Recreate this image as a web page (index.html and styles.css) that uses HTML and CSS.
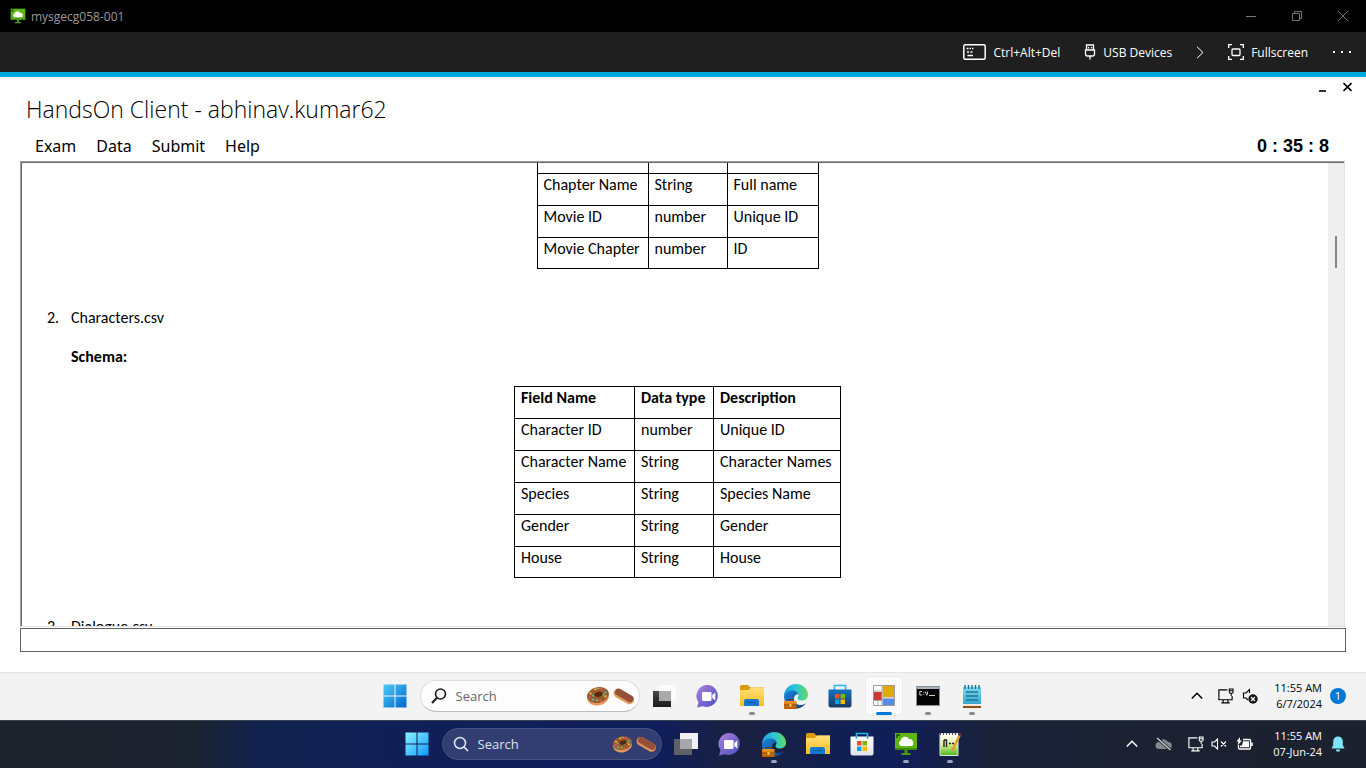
FILE: index.html
```html
<!DOCTYPE html>
<html lang="en">
<head>
<meta charset="utf-8">
<title>mysgecg058-001</title>
<link rel="stylesheet" href="styles.css">
</head>
<body>
<svg class="defs" aria-hidden="true">
  <defs>
    <linearGradient id="winBlue" x1="0" y1="0" x2="1" y2="1"><stop offset="0" stop-color="#4cc9fb"/><stop offset="1" stop-color="#0067c8"/></linearGradient>
    <linearGradient id="winCyan" x1="0" y1="0" x2="1" y2="1"><stop offset="0" stop-color="#8df4ff"/><stop offset="1" stop-color="#0a9bff"/></linearGradient>
    <linearGradient id="chatG" x1="0" y1="0" x2="1" y2="1"><stop offset="0" stop-color="#a982d8"/><stop offset="1" stop-color="#4b4fc4"/></linearGradient>
    <linearGradient id="foldG" x1="0" y1="0" x2="0" y2="1"><stop offset="0" stop-color="#ffe07a"/><stop offset="1" stop-color="#fdbb1f"/></linearGradient>
    <linearGradient id="edgeTop" x1="0" y1="0" x2="1" y2="0"><stop offset="0" stop-color="#1f9fe0"/><stop offset=".5" stop-color="#2cc6d8"/><stop offset="1" stop-color="#5fdc5a"/></linearGradient>
    <linearGradient id="edgeLow" x1="0" y1="0" x2="1" y2="1"><stop offset="0" stop-color="#1b86dc"/><stop offset="1" stop-color="#0b3f86"/></linearGradient>
    <linearGradient id="caseG" x1="0" y1="0" x2="0" y2="1"><stop offset="0" stop-color="#f09a1c"/><stop offset="1" stop-color="#b45a04"/></linearGradient>
    <linearGradient id="bagBlue" x1="0" y1="0" x2="0" y2="1"><stop offset="0" stop-color="#1272c0"/><stop offset="1" stop-color="#1b3a63"/></linearGradient>
    <linearGradient id="bagWhite" x1="0" y1="0" x2="0" y2="1"><stop offset="0" stop-color="#ffffff"/><stop offset="1" stop-color="#dfe3ea"/></linearGradient>
    <linearGradient id="noteG" x1="0" y1="0" x2="0" y2="1"><stop offset="0" stop-color="#7fdcf0"/><stop offset="1" stop-color="#35a6d2"/></linearGradient>
    <linearGradient id="darkG" x1="0" y1="0" x2="0" y2="1"><stop offset="0" stop-color="#454545"/><stop offset="1" stop-color="#1c1c1c"/></linearGradient>
    <linearGradient id="npG" x1="0" y1="0" x2="0" y2="1"><stop offset=".1" stop-color="#fbfff0"/><stop offset=".5" stop-color="#d4f09a"/><stop offset="1" stop-color="#4fb81c"/></linearGradient>
    <symbol id="cloudpc" viewBox="0 0 24 24">
      <path d="M1 1h22v17H1z" fill="#5cb615"/><path d="M1 16h22v2H1z" fill="#3f8a0b"/>
      <path d="M3 6V3h3" fill="none" stroke="#1e4d05" stroke-width="1.4"/>
      <path d="M7 14a3 3 0 0 1-.3-5.600A4.500 4.500 0 0 1 15 7a4 4 0 0 1 3 7z" fill="#fff"/>
      <path d="M10.500 18h3v3h3v2h-9v-2h3z" fill="#4c9c10"/>
    </symbol>
    <symbol id="chat" viewBox="0 0 24 24">
      <path d="M12.500 1A11 11 0 1 1 7 22.200L1 23.500l1.500-5.200A11 11 0 0 1 12.500 1z" fill="url(#chatG)"/>
      <rect x="6" y="8" width="9.500" height="9" rx="1.200" fill="#fff"/><path d="M16.300 11l3-2.500v8l-3-2.500z" fill="#fff"/>
    </symbol>
    <symbol id="folder" viewBox="0 0 26 24">
      <path d="M1 2.500Q1 1 2.500 1H9l2.500 2.500H25V12H1z" fill="#d99a0c"/>
      <path d="M1 6h8.500L12 3.500h13V22H1z" fill="url(#foldG)"/>
      <path d="M5 22v-5q0-2 2-2h11q2 0 2 2v5z" fill="#1479cc"/><path d="M8 18.500h9" stroke="#0b5aa0" stroke-width="1"/>
    </symbol>
    <symbol id="edge" viewBox="0 0 26 26">
      <path d="M1 13C1 6 6.500 1 13 1s12 5 12 10.500c0 4-3 6-6.500 6-3 0-4-1.500-4-2.500s1-1.300 1-3c0-2-2-4-5-4C6 8 2 11 1 13z" fill="url(#edgeTop)"/>
      <path d="M1 13c1-3 4-5.500 8.500-5.500 3.500 0 5.500 2 6 4C13 10.500 11 13 11 16c0 3.500 3 6 6.500 6 2 0 4-.5 5.500-2-2 3.500-6 5.500-10 5.500C6 25.500 1 20 1 13z" fill="url(#edgeLow)"/>
      <path d="M1 18h12.500v8H1z" fill="url(#caseG)"/><path d="M4.500 18v-1.500h5.500V18" fill="none" stroke="#6e3704" stroke-width="1"/>
      <path d="M1 22h12.500" stroke="#8a4604"/><rect x="6.500" y="21" width="2" height="2.500" fill="#ffd257"/>
    </symbol>
    <symbol id="tiles" viewBox="0 0 10 10">
      <path d="M0 0h4.500v4.500H0z" fill="#f25022"/><path d="M5.500 0H10v4.500H5.500z" fill="#7fba00"/><path d="M0 5.500h4.500V10H0z" fill="#00a4ef"/><path d="M5.500 5.500H10V10H5.500z" fill="#ffb900"/>
    </symbol>
    <symbol id="donut" viewBox="0 0 24 20">
      <ellipse cx="12" cy="11" rx="11" ry="8.500" fill="#e39a5a" transform="rotate(-12 12 11)"/>
      <ellipse cx="12" cy="9" rx="11" ry="7.800" fill="#9a5a30" transform="rotate(-12 12 9)"/>
      <ellipse cx="12.500" cy="8.500" rx="4" ry="2.400" fill="#54280f" transform="rotate(-12 12 8)"/>
      <g stroke-width="1.500" stroke-linecap="round"><path d="M4 7l1 .8M9 3.500l1.200-.3M19 11l1-1" stroke="#ffc531"/><path d="M3.500 11l1 .8M15 3l1 .6M14 14.500l1 .4" stroke="#ea4e8c"/><path d="M6.500 14l1-.6M19 6l.8.700M6.500 9.500l.6.400" stroke="#47c7c9"/><path d="M10.500 14l1 .5M12 2.500h.8M17.500 8.500l.6.500" stroke="#82cc4a"/></g>
    </symbol>
    <symbol id="eclair" viewBox="0 0 24 20">
      <rect x="0" y="5.500" width="24" height="10" rx="5" fill="#e2965c" transform="rotate(30 12 10)"/>
      <rect x="1" y="5.500" width="22" height="7.500" rx="3.700" fill="#95503a" transform="rotate(30 12 10)"/>
    </symbol>
    <symbol id="monitor" viewBox="0 0 18 18">
      <path d="M11 2.500H2v10.500h14V9M6.500 13v3M11.500 13v3M4.500 16.300h9" fill="none" stroke="currentColor" stroke-width="1.200"/>
      <path d="M13 1.500h4V5q0 1-1 1h-2q-1 0-1-1zM15 6v3M13.500 3.500h3" fill="none" stroke="currentColor" stroke-width="1.100"/>
    </symbol>
    <symbol id="up" viewBox="0 0 12 12"><path d="M.8 8.500L6 3.300l5.200 5.200" fill="none" stroke="currentColor" stroke-width="1.500"/></symbol>
  </defs>
</svg>

<header class="titlebar">
  <svg class="titlebar-logo"><use href="#cloudpc"/></svg>
  <span class="titlebar-name">mysgecg058-001</span>
  <button class="win-btn" aria-label="Minimize"><svg width="10" height="10" viewBox="0 0 10 10"><path d="M0 5.500h10"/></svg></button>
  <button class="win-btn" aria-label="Restore"><svg width="10" height="10" viewBox="0 0 10 10"><path d="M.5 2.500h7v7h-7zM2.500 2.500v-2h7v7h-2"/></svg></button>
  <button class="win-btn" aria-label="Close"><svg width="10" height="10" viewBox="0 0 10 10"><path d="M0 0l10 10M10 0L0 10"/></svg></button>
</header>

<nav class="toolbar">
  <button class="tool"><svg width="23" height="16" viewBox="0 0 23 16"><rect x=".8" y=".8" width="21.400" height="14.400" rx="1.500" stroke-width="1.500"/><path d="M3.500 4.500h2M6.500 4.500h1.500M9 4.500h1.500M4 8h2M7.500 8h2M4.500 11.500h5.500" stroke-width="1.300"/></svg>Ctrl+Alt+Del</button>
  <button class="tool"><svg width="12" height="16" viewBox="0 0 12 16"><path d="M2.500 6V1h7v5M1.500 6h9v4q0 2-2 2h-5q-2 0-2-2zM6 12v3.500M4.500 3v1.500M7.500 3v1.500" stroke-width="1.300"/></svg>USB Devices</button>
  <button class="tool" aria-label="More devices"><svg width="8" height="13" viewBox="0 0 8 13"><path d="M1 .8l6 5.700-6 5.700"/></svg></button>
  <button class="tool"><svg width="16" height="16" viewBox="0 0 16 16"><path d="M.7 4V.7H4M12 .7h3.300V4M15.300 12v3.300H12M4 15.300H.7V12" stroke-width="1.300"/><rect x="4" y="5" width="8" height="6.500" rx="1" stroke-width="1.300"/></svg>Fullscreen</button>
  <button class="tool" aria-label="More"><svg width="20" height="4" viewBox="0 0 20 4"><path d="M1 2h2M9 2h2M17 2h2" stroke-width="2"/></svg></button>
</nav>

<main class="client">
  <div class="client-head">
    <h1 class="client-title">HandsOn Client - abhinav.kumar62</h1>
    <div class="client-controls">
      <button class="client-btn" aria-label="Minimize"><svg width="9" height="10" viewBox="0 0 9 10"><path d="M1 9h7"/></svg></button>
      <button class="client-btn" aria-label="Close"><svg width="9" height="10" viewBox="0 0 9 10"><path d="M.5 1l8 8M8.500 1l-8 8"/></svg></button>
    </div>
  </div>
  <div class="menu-row">
    <nav class="menu">
      <button class="menu-item">Exam</button>
      <button class="menu-item">Data</button>
      <button class="menu-item">Submit</button>
      <button class="menu-item">Help</button>
    </nav>
    <div class="timer">0 : 35 : 8</div>
  </div>

  <section class="pane">
    <article class="doc">
      <table class="schema">
        <colgroup><col class="c111"><col class="c79"><col class="c91"></colgroup>
        <tbody>
        <tr class="cut"><td></td><td></td><td></td></tr>
        <tr><td>Chapter Name</td><td>String</td><td>Full name</td></tr>
        <tr><td>Movie ID</td><td>number</td><td>Unique ID</td></tr>
        <tr><td>Movie Chapter</td><td>number</td><td>ID</td></tr>
        </tbody>
      </table>
      <p class="entry"><span class="num">2.</span>Characters.csv</p>
      <p class="label">Schema:</p>
      <table class="schema">
        <colgroup><col class="c120"><col class="c79"><col class="c127"></colgroup>
        <thead><tr><th>Field Name</th><th>Data type</th><th>Description</th></tr></thead>
        <tbody>
        <tr><td>Character ID</td><td>number</td><td>Unique ID</td></tr>
        <tr><td>Character Name</td><td>String</td><td>Character Names</td></tr>
        <tr><td>Species</td><td>String</td><td>Species Name</td></tr>
        <tr><td>Gender</td><td>String</td><td>Gender</td></tr>
        <tr><td>House</td><td>String</td><td>House</td></tr>
        </tbody>
      </table>
      <p class="entry"><span class="num">3.</span>Dialogue.csv</p>
    </article>
    <div class="track"><div class="thumb"></div></div>
  </section>
  <input class="status" type="text" aria-label="Status">
</main>

<footer class="taskbar inner">
  <div class="apps">
    <button class="app" aria-label="Start"><svg width="24" height="24" viewBox="0 0 24 24"><path d="M.5.500h11v11H.5zM12.500.500h11v11h-11zM.5 12.500h11v11H.5zM12.500 12.500h11v11h-11z" fill="url(#winBlue)"/></svg></button>
    <label class="search">
      <svg width="16" height="16" viewBox="0 0 16 16"><circle cx="9.500" cy="6" r="5" fill="none" stroke="currentColor" stroke-width="1.600"/><path d="M6 9.800L1 15" stroke="currentColor" stroke-width="2"/></svg>
      <input class="search-box" type="text" placeholder="Search" aria-label="Search">
      <svg width="24" height="20"><use href="#donut"/></svg><svg width="22" height="20"><use href="#eclair"/></svg>
    </label>
    <button class="app" aria-label="Task view"><svg width="24" height="24" viewBox="0 0 24 24"><path d="M1 7h18v16H1z" fill="url(#darkG)"/><path d="M7 1h17v16H7z" fill="#fff" opacity=".75"/><path d="M7 7h12v10H7z" fill="#a9a9a9"/></svg></button>
    <button class="app" aria-label="Chat"><svg width="24" height="24"><use href="#chat"/></svg></button>
    <button class="app running" aria-label="Files"><svg width="26" height="24"><use href="#folder"/></svg></button>
    <button class="app" aria-label="Edge"><svg width="26" height="26"><use href="#edge"/></svg></button>
    <button class="app" aria-label="Store"><svg width="24" height="24" viewBox="0 0 24 24"><path d="M6.500 6V1.500h11V6" fill="none" stroke="#27b4ea" stroke-width="1.600"/><path d="M.5 5.500h23V21q0 2.500-2.500 2.500H3Q.5 23.500.5 21z" fill="url(#bagBlue)"/><use href="#tiles" x="7" y="10" width="10" height="10"/></svg></button>
    <button class="app active" aria-label="HandsOn Client"><svg width="22" height="22" viewBox="0 0 22 22"><path d="M.5.500h21v20H.5z" fill="#fff" stroke="#999"/><path d="M1 7h8v8H1z" fill="#c93a32"/><path d="M9.500 1h11.500v11H9.500z" fill="#e3a70f"/><path d="M9.500 13.500h11.500v6.500H9.500z" fill="#568be6"/><path d="M9 0v21M0 6h9M0 15.500h9M9 13h12M5 15.500V21" stroke="#aaa" fill="none"/></svg></button>
    <button class="app running" aria-label="Command Prompt"><svg width="24" height="20" viewBox="0 0 24 20"><path d="M.5.500h23v19H.5z" fill="#050505" stroke="#8b9199"/><path d="M1 1h22v2H1z" fill="#a9b2bd"/><path d="M6 5.500H3.800v3.500H6M7.800 6v.8M7.800 8v.8M9 5.500l2 4M11.500 5.500v3M13 9.500h6" stroke="#d0d0d0" stroke-width="1" fill="none"/></svg></button>
    <button class="app running" aria-label="Notepad"><svg width="20" height="25" viewBox="0 0 20 25"><path d="M1 20h18v4H1z" fill="#8e4d13"/><path d="M1 20h18v2H1z" fill="#f6ead8"/><path d="M1 3h18v17H1z" fill="url(#noteG)"/><path d="M3 1v4M6.500 1v4M10 1v4M13.500 1v4M17 1v4" stroke="#1a6f8e" stroke-width="1.400"/><path d="M4 8h12M4 12h12M4 16h12" stroke="#1a7797" stroke-width="1.400"/></svg></button>
  </div>
  <div class="tray">
    <span class="slot s30"><svg width="12" height="12"><use href="#up"/></svg></span>
    <span class="slot s26"><svg width="17" height="18"><use href="#monitor"/></svg></span>
    <span class="slot s24"><svg width="16" height="16" viewBox="0 0 16 16"><path d="M7.500 5V1.500L4 5H1.500v5H4l2 2" fill="none" stroke="currentColor" stroke-width="1.100"/><circle cx="11" cy="11" r="4.700" fill="#111"/><path d="M9 9l4 4M13 9l-4 4" stroke="#fff" stroke-width="1.200"/></svg></span>
    <div class="clock"><span>11:55 AM</span><span>6/7/2024</span></div>
    <span class="badge">1</span>
  </div>
</footer>

<footer class="taskbar outer">
  <div class="apps">
    <button class="app" aria-label="Start"><svg width="24" height="24" viewBox="0 0 24 24"><path d="M.5.500h11v11H.5zM12.500.500h11v11h-11zM.5 12.500h11v11H.5zM12.500 12.500h11v11h-11z" fill="url(#winCyan)"/></svg></button>
    <label class="search">
      <svg width="16" height="16" viewBox="0 0 16 16"><circle cx="7" cy="7" r="5.500" fill="none" stroke="currentColor" stroke-width="1.500"/><path d="M11 11l4 4" stroke="currentColor" stroke-width="1.700"/></svg>
      <input class="search-box" type="text" placeholder="Search" aria-label="Search">
      <svg width="21" height="18"><use href="#donut"/></svg><svg width="21" height="18"><use href="#eclair"/></svg>
    </label>
    <button class="app" aria-label="Task view"><svg width="24" height="24" viewBox="0 0 24 24"><path d="M0 7h18v16H0z" fill="#5e6065"/><path d="M6 1h18v16H6z" fill="#f1f1f3"/><path d="M6 7h12v10H6z" fill="#a6a7aa"/></svg></button>
    <button class="app" aria-label="Chat"><svg width="24" height="24"><use href="#chat"/></svg></button>
    <button class="app running" aria-label="Edge"><svg width="26" height="26"><use href="#edge"/></svg></button>
    <button class="app" aria-label="Files"><svg width="26" height="24"><use href="#folder"/></svg></button>
    <button class="app" aria-label="Store"><svg width="24" height="24" viewBox="0 0 24 24"><path d="M6.500 6V1.500h11V6" fill="none" stroke="#27b4ea" stroke-width="1.600"/><path d="M.5 4.500h23V21q0 2.500-2.500 2.500H3Q.5 23.500.5 21z" fill="url(#bagWhite)"/><path d="M6.500 4.500v2M17.500 4.500v2" stroke="#1583c8" stroke-width="1.600"/><use href="#tiles" x="7" y="9" width="10" height="10"/></svg></button>
    <button class="app running" aria-label="Cloud desktop"><svg width="24" height="24"><use href="#cloudpc"/></svg></button>
    <button class="app running" aria-label="Notepad++"><svg width="24" height="25" viewBox="0 0 24 25"><path d="M2 1.500h18v22H2z" fill="url(#npG)" stroke="#e4e4e4"/><path d="M2 2h18" stroke="#555" stroke-dasharray="1 2" fill="none" stroke-width="2"/><path d="M6 8v7M8.500 8v7M6 8h3M11 11.500h2M14 11.500h2" stroke="#222" stroke-width="1.400" fill="none"/><path d="M21.500 3.500L16 15l-1.500 3.500" stroke="#e79a25" stroke-width="2.500" fill="none"/><path d="M20.500 2l2.500 1.300" stroke="#7c3b2d" stroke-width="2.500"/></svg></button>
  </div>
  <div class="tray">
    <span class="slot s22"><svg width="12" height="12"><use href="#up"/></svg></span>
    <span class="slot s40"><svg width="17" height="14" viewBox="0 0 17 14"><path d="M4 12a3.500 3.500 0 0 1 0-7 5 5 0 0 1 9 0 3.500 3.500 0 0 1 .5 7z" fill="#85888e"/><path d="M2 1l13.500 12" stroke="#1c2230" stroke-width="3"/><path d="M2 1l13.500 12" stroke="#dcdcdc" stroke-width="1.200"/></svg></span>
    <span class="slot s24"><svg width="17" height="18"><use href="#monitor"/></svg></span>
    <span class="slot s24"><svg width="16" height="12" viewBox="0 0 16 12"><path d="M1 4h2.500L6.500 1v10L3.500 8H1zM10 3.500l5 5M15 3.500l-5 5" fill="none" stroke="currentColor" stroke-width="1.100"/></svg></span>
    <span class="slot s26"><svg width="17" height="14" viewBox="0 0 17 14"><path d="M7 2.500h6.500q1 0 1 1V11q0 1-1 1h-10q-1 0-1-1V8" fill="none" stroke="currentColor" stroke-width="1.300"/><path d="M7 4.300h6v6H4V8.500h2z" fill="currentColor"/><path d="M4 0L.5 4.500h2L1.500 8.500 6 3.500H4z" fill="currentColor"/><path d="M16 5.500v3.500" stroke="currentColor" stroke-width="1.600"/></svg></span>
    <div class="clock wide"><span>11:55 AM</span><span>07-Jun-24</span></div>
    <svg class="bell" width="16" height="16" viewBox="0 0 16 16"><path d="M8 .5A4.800 4.800 0 0 1 12.800 5.500V9l1.700 3.500h-13L3.200 9V5.500A4.800 4.800 0 0 1 8 .5zM5.800 13.500h4.400a2.200 2.200 0 0 1-4.400 0z" fill="#7fe3fb"/></svg>
  </div>
</footer>
</body>
</html>
```
FILE: styles.css
```css
* { box-sizing: border-box; }

body {
  margin: 0;
  min-height: 100vh;
  display: flex;
  flex-direction: column;
  background: #fff;
  color: #000;
  font-family: "Open Sans", "Noto Sans", sans-serif;
  font-size: 12px;
}

button {
  margin: 0;
  padding: 0;
  border: 0;
  background: none;
  color: inherit;
  font: inherit;
}

svg { display: block; flex: none; }
.defs { position: absolute; width: 0; height: 0; }

/* Remote session title bar */
.titlebar {
  display: flex;
  align-items: center;
  height: 32px;
  padding-left: 10px;
  background: #000;
  color: #9a9a9a;
}
.titlebar-logo { width: 16px; height: 16px; }
.titlebar-name { flex: 1; margin-left: 5px; }
.win-btn {
  display: flex;
  align-items: center;
  justify-content: center;
  width: 46px;
  height: 32px;
  color: #777;
}
.win-btn svg, .tool svg { fill: none; stroke: currentColor; }

/* Remote session toolbar */
.toolbar {
  display: flex;
  justify-content: flex-end;
  align-items: center;
  gap: 24px;
  height: 45px;
  padding-right: 14px;
  background: #1f1f1f;
  border-bottom: 5px solid #00aadb;
  color: #fff;
}
.tool { display: flex; align-items: center; gap: 7px; }

/* Client window */
.client {
  flex: 1;
  display: flex;
  flex-direction: column;
  min-height: 0;
  padding: 0 20px 20px;
}
.client-head {
  display: flex;
  justify-content: space-between;
  padding-left: 6px;
}
.client-title {
  margin: 16px 0 8px;
  font-size: 23px;
  font-weight: 300;
  line-height: 32px;
}
.client-controls { display: flex; gap: 16px; margin: 5px -6px 0 0; height: 10px; }
.client-btn svg { fill: none; stroke: #000; stroke-width: 1.600; }
.menu-row {
  display: flex;
  justify-content: space-between;
  align-items: center;
  height: 28px;
  padding: 0 17px 2px 15px;
}
.menu { display: flex; gap: 20px; }
.menu-item { font-family: "Noto Sans", sans-serif; font-size: 16px; line-height: 24px; }
.timer { font: bold 18px/24px "Liberation Sans Narrow", "Liberation Sans", sans-serif; }

.pane {
  flex: 1 1 0;
  display: flex;
  min-height: 0;
  margin-right: 1px;
  padding: 1px 0 0 1px;
  overflow: hidden;
  border: 1px solid #a0a0a0;
  border-right-color: #e3e3e3;
  border-bottom-color: #e3e3e3;
  box-shadow: inset 1px 1px #696969;
}
.doc {
  flex: 1;
  padding: 0 20px 0 25px;
  font-family: Carlito, Lato, sans-serif;
  font-size: 16px;
  line-height: 20px;
}
.entry, .label { margin: 0 0 19px; }
.entry { display: flex; margin-top: 39px; }
.num { width: 24px; }
.label { padding-left: 24px; font-weight: bold; }

.schema {
  margin: 0 auto;
  border-collapse: collapse;
  table-layout: fixed;
  width: 0;
}
.schema td, .schema th {
  height: 32px;
  padding: 0 0 9px 6px;
  border: 1px solid #000;
  line-height: 22px;
  text-align: left;
  vertical-align: top;
  white-space: nowrap;
}
.schema tr:last-child td { height: 31px; padding-bottom: 8px; }
.schema .cut td { height: 10px; padding: 0; border-top: 0; }
.c79 { width: 79px; }
.c91 { width: 91px; }
.c111 { width: 111px; }
.c120 { width: 120px; }
.c127 { width: 127px; }

.track {
  flex: none;
  width: 16px;
  padding-top: 73px;
  background: #efefef;
}
.thumb { width: 2px; height: 32px; margin: 0 auto; background: #858585; }

.status {
  width: 100%;
  height: 24px;
  margin-top: 1px;
  padding: 0 4px;
  border: 1px solid #646464;
  background: #fff;
}

/* Taskbars */
.taskbar {
  display: grid;
  grid-template-columns: 1fr auto 1fr;
  align-items: center;
  height: 48px;
}
.inner { background: #f3f3f3; box-shadow: inset 0 1px #e5e5e5; }
.outer {
  background: linear-gradient(90deg, #1d222c 0%, #1b232e 14%, #12234f 19%, #101f58 30%, #101d5c 48%, #1a2140 54%, #102054 62%, #101f58 66%, #1b2236 73%, #1b212d 100%);
  box-shadow: inset 0 1px #3b4250;
  color: #fff;
}
.apps { grid-column: 2; display: flex; align-items: center; }
.app {
  position: relative;
  display: flex;
  align-items: center;
  justify-content: center;
  width: 44px;
  height: 48px;
}
.app.running::after, .app.active::after {
  content: "";
  position: absolute;
  bottom: 5px;
  left: 19px;
  width: 6px;
  height: 3px;
  border-radius: 2px;
  background: #8b8b8b;
}
.outer .app.running::after { background: #9aa3b8; }
.app.active::before {
  content: "";
  position: absolute;
  inset: 4px 3px;
  border: 1px solid #e8e8e8;
  border-radius: 4px;
  background: #fbfbfb;
}
.app.active svg { position: relative; }
.app.active::after { left: 14px; width: 16px; background: #0078d4; }

.search {
  display: flex;
  align-items: center;
  width: 220px;
  height: 32px;
  margin: 0 2px 0 3px;
  padding: 0 4px 0 10px;
  border: 1px solid #dcdcdc;
  border-bottom-color: #bdbdbd;
  border-radius: 16px;
  background: #fdfdfd;
  color: #1b1b1b;
}
.search-box {
  flex: 1;
  min-width: 0;
  padding: 0 0 0 9px;
  border: 0;
  background: none;
  color: inherit;
  font: 13px/20px "Open Sans", sans-serif;
}
.search-box::placeholder { color: #666; opacity: 1; }
.search svg + svg { margin-left: 3px; }
.outer .search { border-color: #46527f; background: #323e72; color: #e4e8f5; }
.outer .search-box::placeholder { color: #dde1f0; }

.tray {
  grid-column: 3;
  justify-self: end;
  display: flex;
  align-items: center;
  padding-right: 20px;
}
.slot { display: flex; justify-content: center; }
.s22 { width: 22px; }
.s24 { width: 24px; }
.s26 { width: 26px; }
.s30 { width: 30px; }
.s40 { width: 40px; }
.clock {
  display: flex;
  flex-direction: column;
  align-items: flex-end;
  width: 60px;
  margin-right: 8px;
  font-size: 11px;
  line-height: 16px;
}
.clock.wide { width: 65px; }
.badge {
  width: 16px;
  height: 16px;
  border-radius: 50%;
  background: #0078d4;
  color: #fff;
  font-size: 11px;
  line-height: 16px;
  text-align: center;
}
```
